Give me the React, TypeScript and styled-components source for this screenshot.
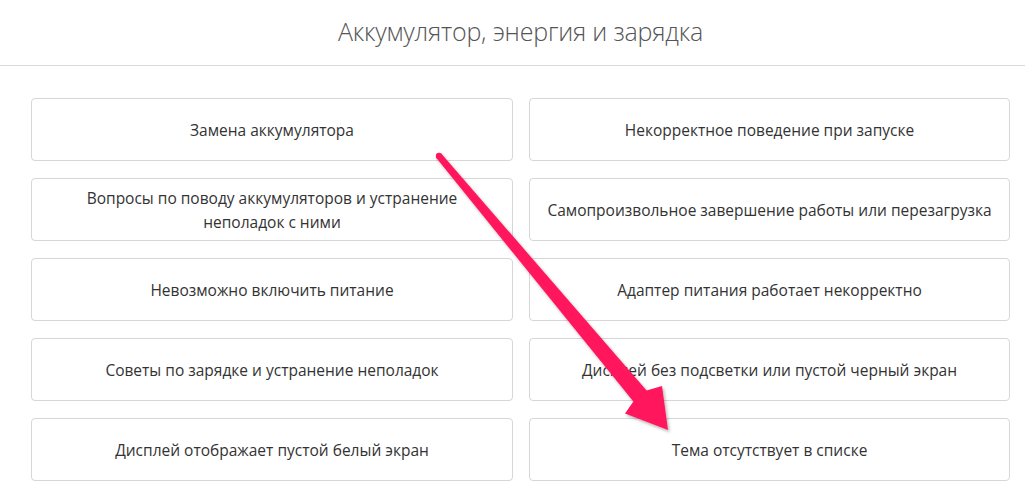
import React from 'react';
import styled, { createGlobalStyle } from 'styled-components';

const GlobalStyle = createGlobalStyle`
  body {
    margin: 0;
    background: #fff;
    font-family: "Open Sans", "Liberation Sans", sans-serif;
    color: #333;
  }
`;

const Page = styled.div`
  position: relative;
  width: 1025px;
  height: 493px;
  overflow: hidden;
`;

const Header = styled.header`
  height: 65px;
  border-bottom: 1px solid #d9d9d9;
  display: flex;
  align-items: center;
  justify-content: center;
  padding: 0 15px 0 31px;
`;

const Title = styled.h1`
  margin: 0 0 4px;
  font-size: 25px;
  font-weight: 300;
  color: #555;
  letter-spacing: -0.2px;
`;

const Grid = styled.div`
  display: grid;
  grid-template-columns: 482px 481px;
  column-gap: 16px;
  row-gap: 17px;
  padding: 32px 15px 0 31px;
`;

const Topic = styled.button`
  height: 63px;
  padding: 0 16px;
  background: #fff;
  border: 1px solid #d6d6d6;
  border-radius: 4px;
  font-family: "Open Sans", "Liberation Sans", sans-serif;
  font-size: 15.5px;
  line-height: 24px;
  color: #333;
  text-align: center;
  cursor: pointer;
`;

const Arrow = styled.svg`
  position: absolute;
  left: 0;
  top: 0;
  pointer-events: none;
`;

const topics = [
  'Замена аккумулятора',
  'Некорректное поведение при запуске',
  'Вопросы по поводу аккумуляторов и устранение неполадок с ними',
  'Самопроизвольное завершение работы или перезагрузка',
  'Невозможно включить питание',
  'Адаптер питания работает некорректно',
  'Советы по зарядке и устранение неполадок',
  'Дисплей без подсветки или пустой черный экран',
  'Дисплей отображает пустой белый экран',
  'Тема отсутствует в списке',
];

export default function App() {
  return (
    <Page>
      <GlobalStyle />
      <Header>
        <Title>Аккумулятор, энергия и зарядка</Title>
      </Header>
      <Grid>
        {topics.map((t) => (
          <Topic key={t}>{t}</Topic>
        ))}
      </Grid>
      {/* pointer drawn over the list: tapered shaft ending in a wide head */}
      <Arrow width="1025" height="493" viewBox="0 0 1025 493">
        <defs>
          <filter id="shade" x="-20%" y="-20%" width="140%" height="140%">
            <feDropShadow dx="1.5" dy="2" stdDeviation="1.5" floodColor="#000" floodOpacity="0.3" />
          </filter>
        </defs>
        <g filter="url(#shade)" fill="#ff155c">
          <circle cx="439" cy="156" r="3.2" />
          <polygon points="436.6,158.3 633.4,401.5 625,413.5 668,430 662,386 646.6,390.5 441.4,153.7" />
        </g>
      </Arrow>
    </Page>
  );
}
